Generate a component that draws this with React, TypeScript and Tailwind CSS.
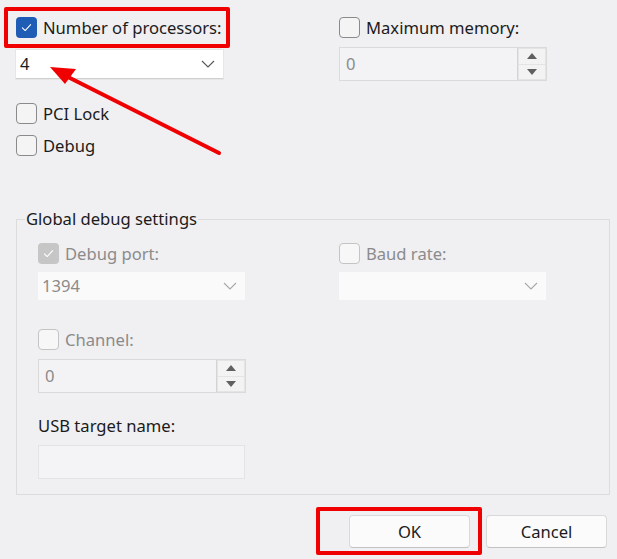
import type { ReactNode } from "react";

function Check({ checked = false, disabled = false }: { checked?: boolean; disabled?: boolean }) {
  if (checked) {
    return (
      <span
        className={
          "grid h-[21px] w-[21px] shrink-0 place-items-center rounded-[4px] " +
          (disabled ? "bg-[#c6c6c6]" : "bg-[#1f5cb5]")
        }
      >
        <svg viewBox="0 0 12 12" className="h-[13px] w-[13px]" fill="none">
          <path d="M2.2 6.3 4.8 8.8 9.8 3.4" stroke="white" strokeWidth="1" strokeLinecap="round" strokeLinejoin="round" />
        </svg>
      </span>
    );
  }
  return (
    <span
      className={
        "h-[21px] w-[21px] shrink-0 rounded-[4px] border " +
        (disabled ? "border-[#c4c4c4] bg-[#f7f7f7]" : "border-[#8a8a8a] bg-[#f4f4f4]")
      }
    />
  );
}

function CheckRow({
  label,
  checked,
  disabled,
}: {
  label: string;
  checked?: boolean;
  disabled?: boolean;
}) {
  return (
    <label className="flex h-[21px] items-center gap-[6px]">
      <Check checked={checked} disabled={disabled} />
      <span className={disabled ? "text-[#8b8b8b]" : "text-[#1b1b1b]"}>{label}</span>
    </label>
  );
}

function Chevron({ disabled }: { disabled?: boolean }) {
  return (
    <svg viewBox="0 0 14 8" className="h-[8px] w-[14px]" fill="none">
      <path d="M1 1 7 7 13 1" stroke={disabled ? "#a8a8a8" : "#555"} strokeWidth="1.1" />
    </svg>
  );
}

function Select({ value, disabled, h = "h-[29px]" }: { value: string; disabled?: boolean; h?: string }) {
  return (
    <div
      className={
        "flex w-[207px] items-center justify-between pl-[4px] pr-[8px] " +
        h +
        " " +
        (disabled
          ? "bg-[#fafafa] text-[#8b8b8b]"
          : "border-b border-[#d0d0d0] bg-white text-[#1b1b1b] shadow-[0_0_0_1px_#e6e6e6]")
      }
    >
      <span>{value}</span>
      <Chevron disabled={disabled} />
    </div>
  );
}

function Arrow({ up }: { up?: boolean }) {
  return (
    <svg viewBox="0 0 10 6" className="h-[6px] w-[10px]">
      <path d={up ? "M0 6 5 0 10 6Z" : "M0 0 5 6 10 0Z"} fill="#606060" />
    </svg>
  );
}

function Spinner({ value, w = "w-[208px]", h = "h-[34px]" }: { value: string; w?: string; h?: string }) {
  return (
    <div className={"flex border border-[#dadada] bg-[#f3f3f5] " + w + " " + h}>
      <span className="flex flex-1 items-center pl-[6px] text-[#8b8b8b]">{value}</span>
      <div className="flex w-[29px] flex-col gap-px border-l border-[#d4d4d4] bg-[#e4e4e4] p-px">
        <span className="grid flex-1 place-items-center bg-[#f3f3f3]">
          <Arrow up />
        </span>
        <span className="grid flex-1 place-items-center bg-[#f3f3f3]">
          <Arrow />
        </span>
      </div>
    </div>
  );
}

function Button({ children }: { children: ReactNode }) {
  return (
    <button
      type="button"
      className="h-[33px] w-[121px] rounded-[4px] border border-[#d9d9d9] border-b-[#c2c2c2] bg-[#fbfbfb] text-[#1b1b1b]"
    >
      {children}
    </button>
  );
}

export default function App() {
  return (
    <div className="relative h-[559px] w-[617px] overflow-hidden bg-[#f0eff2] font-['Noto_Sans',sans-serif] text-[16.6px] leading-[22px] text-[#1b1b1b]">
      <div className="grid grid-cols-[323px_1fr] pl-4 pt-[17px]">
        <div className="flex flex-col">
          <CheckRow label="Number of processors:" checked />
          <div className="mt-[12px]">
            <Select value="4" />
          </div>
          <div className="mt-[24px] flex flex-col gap-[11px]">
            <CheckRow label="PCI Lock" />
            <CheckRow label="Debug" />
          </div>
        </div>
        <div className="flex flex-col">
          <CheckRow label="Maximum memory:" />
          <div className="mt-[9px]">
            <Spinner value="0" />
          </div>
        </div>
      </div>

      <fieldset className="ml-4 mt-[51px] h-[288px] w-[594px] border border-[#dcdcdc] px-[21px] pb-0">
        <legend className="ml-[-13px] px-px leading-[24px] text-[#1b1b1b]">Global debug settings</legend>
        <div className="grid grid-cols-[301px_1fr] pt-[12px]">
          <div className="flex flex-col">
            <CheckRow label="Debug port:" checked disabled />
            <div className="mt-[8px]">
              <Select value="1394" disabled h="h-[28px]" />
            </div>
            <div className="mt-[29px]">
              <CheckRow label="Channel:" disabled />
            </div>
            <div className="mt-[9px]">
              <Spinner value="0" h="h-[34px]" />
            </div>
            <span className="mt-[22px]">USB target name:</span>
            <div className="mt-[8px] h-[34px] w-[207px] border border-[#e4e4e4] bg-[#f4f4f6]" />
          </div>
          <div className="flex flex-col">
            <CheckRow label="Baud rate:" disabled />
            <div className="mt-[8px]">
              <Select value="" disabled h="h-[28px]" />
            </div>
          </div>
        </div>
      </fieldset>

      <div className="mt-[20px] flex justify-end gap-[16px] pr-[10px]">
        <Button>OK</Button>
        <Button>Cancel</Button>
      </div>

      {/* annotations drawn on top of the dialog */}
      <div className="pointer-events-none absolute left-[4px] top-[7px] h-[41px] w-[226px] rounded-[2px] border-[4px] border-[#f00000]" />
      <div className="pointer-events-none absolute left-[316px] top-[507px] h-[48px] w-[166px] rounded-[2px] border-[4px] border-[#f00000]" />
      <svg className="pointer-events-none absolute left-0 top-0" width="617" height="559">
        <line x1="219" y1="153" x2="64" y2="75" stroke="#f00000" strokeWidth="4" strokeLinecap="round" />
        <path d="M50 67 76 69 65 84Z" fill="#f00000" />
      </svg>
    </div>
  );
}
